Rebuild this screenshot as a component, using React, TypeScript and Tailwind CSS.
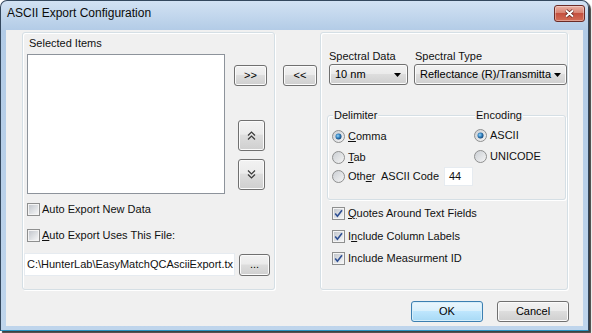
import React from 'react'

const btn =
  'rounded-[3px] border border-[#707070] bg-[linear-gradient(#f2f2f2,#ebebeb_45%,#dddddd_50%,#cfcfcf)] shadow-[inset_0_0_0_1px_#fbfbfb] flex items-center justify-center text-[11px] text-black'

const okBtn =
  'rounded-[3px] border border-[#3c7fb1] bg-[linear-gradient(#eaf6fd,#d9f0fc_45%,#bee6fd_50%,#a7d9f5)] shadow-[inset_0_0_0_1px_#d6eefa] flex items-center justify-center text-[11px] text-black'

const box =
  'border border-[#d5dfe5] rounded-[3px] shadow-[inset_1px_1px_0_#ffffff,1px_1px_0_#ffffff]'

const CheckBox = ({ checked }: { checked?: boolean }) => (
  <svg width="13" height="13" viewBox="0 0 13 13" className="shrink-0">
    <defs>
      <linearGradient id="cbfill" x1="0" y1="0" x2="1" y2="1">
        <stop offset="0" stopColor="#c3c7cd" />
        <stop offset="1" stopColor="#f4f5f6" />
      </linearGradient>
    </defs>
    <rect x="0.5" y="0.5" width="12" height="12" fill="#f4f4f4" stroke="#8e8f8f" />
    <rect x="2" y="2" width="9" height="9" fill="url(#cbfill)" />
    {checked && (
      <path d="M3.2 6.6 L5.4 9.2 L10 3.2" fill="none" stroke="#2e4f93" strokeWidth="1.6" />
    )}
  </svg>
)

const Radio = ({ checked }: { checked?: boolean }) => (
  <svg width="13" height="13" viewBox="0 0 13 13" className="shrink-0">
    <defs>
      <linearGradient id="rdfill" x1="0" y1="0" x2="1" y2="1">
        <stop offset="0" stopColor="#c9cdd2" />
        <stop offset="1" stopColor="#f6f6f6" />
      </linearGradient>
      <radialGradient id="rddot" cx="0.4" cy="0.4" r="0.6">
        <stop offset="0" stopColor="#9fd8f7" />
        <stop offset="0.5" stopColor="#3b8ac7" />
        <stop offset="1" stopColor="#14477a" />
      </radialGradient>
    </defs>
    <circle cx="6.5" cy="6.5" r="6" fill="url(#rdfill)" stroke="#8e8f8f" />
    {checked && <circle cx="6.5" cy="6.5" r="3" fill="url(#rddot)" />}
  </svg>
)

const Triangle = () => (
  <svg width="7" height="4" viewBox="0 0 7 4" className="shrink-0">
    <path d="M0 0 H7 L3.5 4 Z" fill="#000" />
  </svg>
)

const DoubleChevron = ({ down }: { down?: boolean }) => (
  <svg width="9" height="9" viewBox="0 0 9 9" className={down ? 'rotate-180' : ''}>
    <path d="M1 4.5 L4.5 1 L8 4.5 M1 8.5 L4.5 5 L8 8.5" fill="none" stroke="#3a3a3a" strokeWidth="1.2" />
  </svg>
)

const Dropdown = ({ text, w }: { text: string; w: string }) => (
  <div className={`${btn} ${w} h-[21px] !justify-start pl-[5px] pr-[6px] gap-[3px]`}>
    <span className="flex-1 whitespace-nowrap">{text}</span>
    <Triangle />
  </div>
)

export default function App() {
  return (
    <div className="w-[592px] h-[333px] bg-white font-['Liberation_Sans',Arial,sans-serif] text-[11px] text-[#111]">
      <div className="w-[589px] h-[331px] flex flex-col rounded-t-[7px] border border-[#34485e] border-b-[#2a93c0] shadow-[2px_2px_1px_rgba(0,0,0,0.75)] bg-[linear-gradient(180deg,#d2e2f3_0px,#b2cbe6_30px,#bfd5ec_100%)]">
        {/* title bar */}
        <div className="h-[29px] flex items-start shrink-0">
          <span className="ml-[6px] mt-[5px] text-[12px] leading-[15px] text-[#0b0b0b]">
            ASCII Export Configuration
          </span>
          <div className="ml-auto mr-[3px] mt-[4px] w-[31px] h-[17px] rounded-[3px] border border-[#6b2b26] bg-[linear-gradient(#eab0a2,#d88473_45%,#c4503f_50%,#d36d56)] shadow-[inset_0_0_0_1px_rgba(255,255,255,0.35)] flex items-center justify-center">
            <svg width="11" height="9" viewBox="0 0 11 9">
              <path d="M2 1.5 L9 7.5 M9 1.5 L2 7.5" stroke="#5a1e19" strokeWidth="3.4" />
              <path d="M2 1.5 L9 7.5 M9 1.5 L2 7.5" stroke="#ffffff" strokeWidth="1.9" />
            </svg>
          </div>
        </div>

        {/* client area */}
        <div className="flex-1 mx-[5px] mb-[4px] bg-[#f0f0f0] flex flex-col pt-[2px] pl-[16px]">
          <div className="flex items-start">
            {/* left group */}
            <div className={`${box} w-[253px] h-[258px] flex flex-col`}>
              <span className="ml-[6px] mt-[4px] leading-[13px]">Selected Items</span>
              <div className="flex mt-[4px] ml-[4px]">
                <div className="w-[198px] h-[140px] bg-white border border-[#8d939b]" />
                <div className="flex flex-col ml-[9px]">
                  <div className={`${btn} mt-[11px] w-[33px] h-[21px]`}>&gt;&gt;</div>
                  <div className={`${btn} mt-[34px] ml-[4px] w-[27px] h-[31px]`}>
                    <DoubleChevron />
                  </div>
                  <div className={`${btn} mt-[8px] ml-[4px] w-[27px] h-[31px]`}>
                    <DoubleChevron down />
                  </div>
                </div>
              </div>
              <div className="flex items-center gap-[2px] ml-[4px] mt-[9px] h-[13px]">
                <CheckBox />
                <span>Auto Export New Data</span>
              </div>
              <div className="flex items-center gap-[2px] ml-[4px] mt-[13px] h-[13px]">
                <CheckBox />
                <span>
                  <u>A</u>uto Export Uses This File:
                </span>
              </div>
              <div className="flex items-center ml-[1px] mt-[11px]">
                <div className="w-[211px] h-[23px] bg-white border border-[#e6ebf0] pl-[2px] flex items-center whitespace-nowrap">
                  C:\HunterLab\EasyMatchQCAsciiExport.tx
                </div>
                <div className={`${btn} ml-[4px] w-[31px] h-[22px] text-[#333]`}>...</div>
              </div>
            </div>

            {/* middle */}
            <div className="w-[45px] flex">
              <div className={`${btn} ml-[8px] mt-[33px] w-[34px] h-[21px]`}>&lt;&lt;</div>
            </div>

            {/* right group */}
            <div className={`${box} w-[248px] h-[258px] flex flex-col`}>
              <div className="flex mt-[17px] ml-[8px] leading-[13px]">
                <span className="w-[86px]">Spectral Data</span>
                <span>Spectral Type</span>
              </div>
              <div className="flex mt-[1px] ml-[8px] gap-[6px]">
                <Dropdown text="10 nm" w="w-[79px]" />
                <Dropdown text="Reflectance (R)/Transmitta" w="w-[153px]" />
              </div>

              <div className={`${box} mt-[30px] ml-[6px] w-[239px] h-[85px] flex`}>
                <div className="w-[145px] flex flex-col">
                  <span className="-mt-[7px] ml-[5px] self-start px-[1px] bg-[#f0f0f0] leading-[13px]">
                    Delimiter
                  </span>
                  <div className="flex items-center gap-[3px] ml-[4px] mt-[8px] h-[13px]">
                    <Radio checked />
                    <span>
                      <u>C</u>omma
                    </span>
                  </div>
                  <div className="flex items-center gap-[3px] ml-[4px] mt-[8px] h-[13px]">
                    <Radio />
                    <span>
                      <u>T</u>ab
                    </span>
                  </div>
                  <div className="flex items-center ml-[4px] mt-[3px] h-[19px]">
                    <Radio />
                    <span className="ml-[3px] w-[33px]">
                      Oth<u>e</u>r
                    </span>
                    <span className="w-[63px]">ASCII Code</span>
                    <div className="w-[29px] h-[19px] bg-white border border-[#e6ebf0] pl-[4px] flex items-center">
                      44
                    </div>
                  </div>
                </div>
                <div className="flex flex-col">
                  <span className="-mt-[7px] ml-[2px] self-start px-[1px] bg-[#f0f0f0] leading-[13px]">
                    Encoding
                  </span>
                  <div className="flex items-center gap-[3px] ml-[1px] mt-[7px] h-[13px]">
                    <Radio checked />
                    <span>ASCII</span>
                  </div>
                  <div className="flex items-center gap-[3px] ml-[1px] mt-[8px] h-[13px]">
                    <Radio />
                    <span>UNICODE</span>
                  </div>
                </div>
              </div>

              <div className="flex items-center gap-[3px] ml-[11px] mt-[7px] h-[13px]">
                <CheckBox checked />
                <span>
                  <u>Q</u>uotes Around Text Fields
                </span>
              </div>
              <div className="flex items-center gap-[3px] ml-[11px] mt-[10px] h-[13px]">
                <CheckBox checked />
                <span>
                  I<u>n</u>clude Column Labels
                </span>
              </div>
              <div className="flex items-center gap-[3px] ml-[11px] mt-[9px] h-[13px]">
                <CheckBox checked />
                <span>Include Measurment ID</span>
              </div>
            </div>
          </div>

          {/* bottom buttons */}
          <div className="flex justify-end gap-[14px] pr-[14px] mt-[11px]">
            <div className={`${okBtn} w-[72px] h-[21px]`}>OK</div>
            <div className={`${btn} w-[72px] h-[21px]`}>Cancel</div>
          </div>
        </div>
      </div>
    </div>
  )
}
